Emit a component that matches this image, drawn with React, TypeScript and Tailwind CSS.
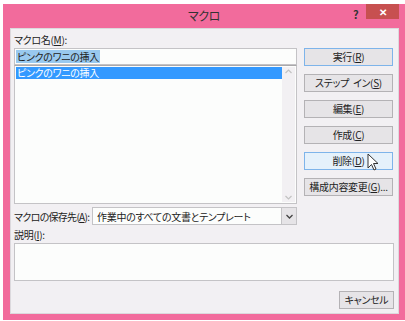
import { ReactNode } from 'react';

const font = { fontFamily: '"Noto Sans CJK JP", "Noto Sans", sans-serif' };

const Btn = ({ children, variant = 'normal' }: { children: ReactNode; variant?: 'normal' | 'default' | 'hover' }) => {
  const cls =
    variant === 'hover'
      ? 'bg-[#e5f1fb] border-[#7eb4ea]'
      : variant === 'default'
        ? 'bg-[#e6e4e7] border-[#7eb4ea]'
        : 'bg-[#e6e4e7] border-[#b4b2b5]';
  return (
    <div className={`h-[18px] w-[89px] border ${cls} flex items-center justify-center text-[#222] leading-none`}>
      {children}
    </div>
  );
};

const Cursor = () => (
  <svg className="absolute left-[367px] top-[153px]" width="12" height="19" viewBox="0 0 12 19">
    <path d="M1 1 L1 15 L4.5 11.5 L7 17 L9 16 L6.5 10.5 L11 10.5 Z" fill="#fff" stroke="#333" strokeWidth="1" strokeLinejoin="round" />
  </svg>
);

export default function App() {
  return (
    <div
      className="relative w-[405px] h-[321px] bg-white overflow-hidden whitespace-nowrap [font-feature-settings:'palt'] tracking-[-0.3px]"
      style={font}
    >
      <div className="absolute left-[3px] top-[4px] w-[402px] h-[316px] bg-[#f26b9c] flex flex-col">
        {/* title bar */}
        <div className="relative h-[24px] flex items-center justify-center">
          <span className="text-[12px] text-[#333]">マクロ</span>
          <span className="absolute left-[350px] top-[2px] text-[11px] font-bold text-[#333]">?</span>
          <div className="absolute left-[363px] top-0 w-[33px] h-[15px] bg-[#c75050] flex items-center justify-center text-white text-[10px] font-bold leading-none">
            ✕
          </div>
        </div>
        {/* content */}
        <div className="ml-[7px] mr-[6px] h-[286px] bg-[#f2f0f3] border border-[#dcd9dd] pl-[3px] flex flex-col text-[10px] text-[#222]">
          <div className="flex">
            <div className="w-[283px] flex flex-col">
              <div className="h-[19px] flex items-center pt-[2px]">
                マクロ名(<u>M</u>):
              </div>
              <div className="h-[17px] bg-[#fcfdfc] border border-[#c4c3c6] flex items-center px-[1px]">
                <span className="bg-[#99c9ef] leading-[13px] px-[1px]">ピンクのワニの挿入</span>
              </div>
              <div className="h-[139px] bg-[#fcfdfc] border border-[#c4c3c6] border-t-[#a9a8ab] flex p-[1px]">
                <div className="flex-1">
                  <div className="h-[12px] bg-[#3399ff] text-white flex items-center px-[1px] leading-none">
                    ピンクのワニの挿入
                  </div>
                </div>
                <div className="w-[13px] bg-[#f2f0f3] flex flex-col justify-between items-center py-[2px]">
                  <svg width="7" height="5" viewBox="0 0 7 5"><path d="M0.5 4 L3.5 1 L6.5 4" fill="none" stroke="#c2c2c2" strokeWidth="1.2" /></svg>
                  <svg width="7" height="5" viewBox="0 0 7 5"><path d="M0.5 1 L3.5 4 L6.5 1" fill="none" stroke="#c2c2c2" strokeWidth="1.2" /></svg>
                </div>
              </div>
            </div>
            <div className="ml-[7px] mt-[19px] flex flex-col gap-[8px]">
              <Btn variant="default">実行(<u>R</u>)</Btn>
              <Btn>ステップ<span className="w-[4px]" />イン(<u>S</u>)</Btn>
              <Btn>編集(<u>E</u>)</Btn>
              <Btn>作成(<u>C</u>)</Btn>
              <Btn variant="hover">削除(<u>D</u>)</Btn>
              <Btn>構成内容変更(<u>G</u>)...</Btn>
            </div>
          </div>
          {/* save location */}
          <div className="mt-[3px] flex items-center h-[18px]">
            <div className="w-[78px] tracking-[-0.7px]">
              マクロの保存先(<u>A</u>):
            </div>
            <div className="w-[205px] h-[18px] bg-[#fcfdfc] border border-[#c4c3c6] flex items-center">
              <span className="flex-1 pl-[4px]">作業中のすべての文書とテンプレート</span>
              <div className="w-[15px] h-full bg-[#e6e4e7] border-l border-[#c4c3c6] flex items-center justify-center">
                <svg width="7" height="5" viewBox="0 0 7 5"><path d="M0.5 1 L3.5 4 L6.5 1" fill="none" stroke="#444" strokeWidth="1.3" /></svg>
              </div>
            </div>
          </div>
          <div className="h-[17px] mt-[1px] flex items-center">
            説明(<u>I</u>):
          </div>
          <div className="w-[380px] h-[38px] bg-[#fcfdfc] border border-[#c4c3c6]" />
          <div className="mt-[10px] w-[380px] flex justify-end">
            <div className="h-[18px] w-[55px] bg-[#e6e4e7] border border-[#b4b2b5] flex items-center justify-center leading-none">
              キャンセル
            </div>
          </div>
        </div>
      </div>
      <Cursor />
    </div>
  );
}
